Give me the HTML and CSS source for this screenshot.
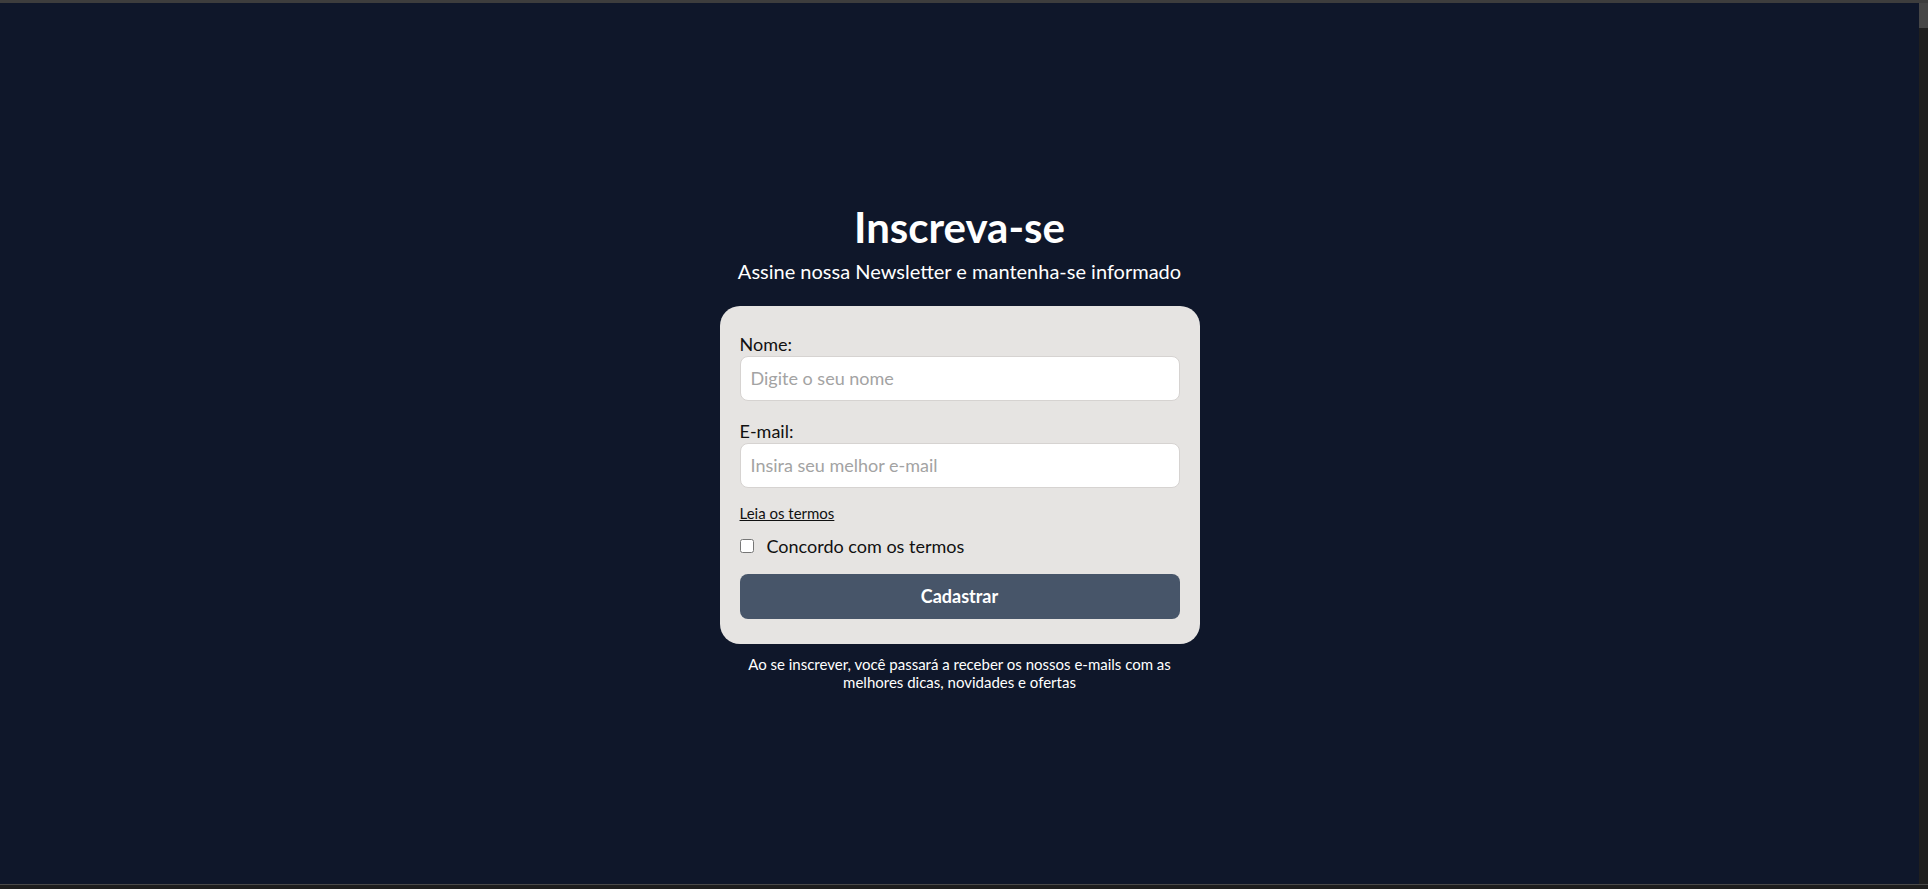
FILE: index.html
```html
<!DOCTYPE html>
<html lang="pt-BR">
<head>
<meta charset="utf-8">
<title>Inscreva-se</title>
<link rel="stylesheet" href="styles.css">
</head>
<body>
<div class="frame">
  <div class="topbar"></div>
  <div class="middle">
    <main class="page">
      <h1 class="title">Inscreva-se</h1>
      <p class="subtitle">Assine nossa Newsletter e mantenha-se informado</p>
      <form class="card">
        <label class="label" for="nome">Nome:</label>
        <input class="field" id="nome" type="text" placeholder="Digite o seu nome">
        <label class="label label-gap" for="email">E-mail:</label>
        <input class="field" id="email" type="email" placeholder="Insira seu melhor e-mail">
        <a class="terms-link" href="#">Leia os termos</a>
        <label class="check-row"><input class="check" type="checkbox"><span>Concordo com os termos</span></label>
        <button class="submit" type="button">Cadastrar</button>
      </form>
      <p class="note">Ao se inscrever, você passará a receber os nossos e-mails com as melhores dicas, novidades e ofertas</p>
    </main>
    <div class="scrollstrip"><div class="thumb"></div></div>
  </div>
  <div class="bottombar"></div>
</div>
</body>
</html>
```
FILE: styles.css
```css
html, body {
  margin: 0;
  height: 100%;
  background: #1e1e1e;
}
body {
  font-family: "Lato", "Open Sans", sans-serif;
  overflow: hidden;
}
.frame {
  display: flex;
  flex-direction: column;
  height: 889px;
}
.topbar {
  height: 3px;
  background: #3d3d3d;
  flex: none;
}
.middle {
  flex: 1;
  display: flex;
  min-height: 0;
}
.page {
  flex: 1;
  background: #0f172a;
  display: flex;
  flex-direction: column;
  align-items: center;
  justify-content: center;
  padding-top: 5px;
}
.scrollstrip {
  width: 9px;
  background: #1f1f1f;
  flex: none;
}
.thumb {
  height: 25px;
  background: #464646;
}
.bottombar {
  height: 4px;
  border-top: 1px solid #4a4a4a;
  background: #1e1e1e;
  flex: none;
}
.title {
  margin: 0;
  color: #ffffff;
  font-size: 42px;
  line-height: 50px;
  font-weight: 700;
}
.subtitle {
  margin: 6px 0 22px;
  color: #ffffff;
  font-size: 20px;
  line-height: 26px;
}
.card {
  width: 480px;
  box-sizing: border-box;
  padding: 26px 20px 25px;
  background: #e6e4e2;
  border-radius: 20px;
  display: flex;
  flex-direction: column;
}
.label {
  font-size: 18px;
  line-height: 24px;
  color: #111111;
}
.label-gap {
  margin-top: 18px;
}
.field {
  height: 45px;
  box-sizing: border-box;
  border: 1px solid #d6d3d1;
  border-radius: 8px;
  background: #ffffff;
  padding: 0 10px;
  font-family: inherit;
  font-size: 18px;
  color: #111111;
  outline: none;
}
.field::placeholder {
  color: #a3a3a3;
}
.terms-link {
  margin-top: 15px;
  align-self: flex-start;
  font-size: 15px;
  line-height: 20px;
  color: #111111;
  text-decoration: underline;
}
.check-row {
  margin-top: 11px;
  display: flex;
  align-items: center;
  gap: 13px;
  font-size: 18px;
  line-height: 24px;
  color: #111111;
}
.check {
  margin: 0;
  width: 14px;
  height: 14px;
}
.submit {
  margin-top: 16px;
  height: 45px;
  border: none;
  border-radius: 8px;
  background: #475569;
  color: #ffffff;
  font-family: inherit;
  font-size: 18px;
  font-weight: 700;
}
.note {
  margin: 11px 0 0;
  width: 440px;
  text-align: center;
  color: #ffffff;
  font-size: 15px;
  line-height: 18px;
}
```
